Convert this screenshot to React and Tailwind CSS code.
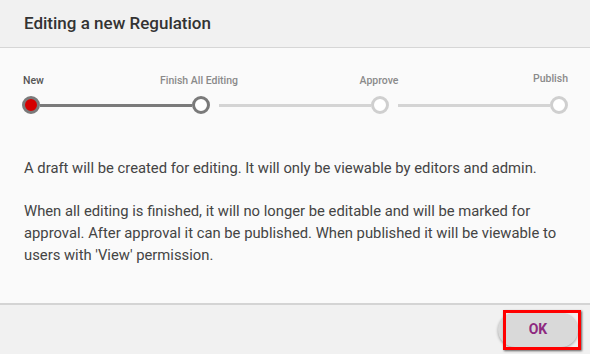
const steps = ['New', 'Finish All Editing', 'Approve', 'Publish'];

const Circle = ({ active, done }) => (
  <div
    className={`w-[18px] h-[18px] rounded-full shrink-0 border-[3px] ${
      active ? 'bg-[#d50000] border-[#7a7a7a]' : done ? 'bg-white border-[#7a7a7a]' : 'bg-white border-[#cfcfcf]'
    }`}
  />
);

const Stepper = () => (
  <div className="px-[22px] pt-[24px]">
    <div className="flex text-[10.5px] leading-[14px] font-medium">
      <div className="w-[117px] pl-[1px] text-[#555] mt-[2px]">{steps[0]}</div>
      <div className="w-[120px] text-center text-[#8a8a8a] mt-[2px]">{steps[1]}</div>
      <div className="w-[240px] text-center text-[#8a8a8a] mt-[2px]">{steps[2]}</div>
      <div className="w-[69px] text-right text-[#8a8a8a]">{steps[3]}</div>
    </div>
    <div className="flex items-center mt-[8px] w-[546px]">
      <Circle active />
      <div className="flex-1 h-[3px] bg-[#7a7a7a]" />
      <Circle done />
      <div className="flex-1 h-[3px] bg-[#d4d4d4] ml-[9px]" />
      <Circle />
      <div className="flex-1 h-[3px] bg-[#d4d4d4] ml-[9px]" />
      <Circle />
    </div>
  </div>
);

export default function App() {
  return (
    <div className="w-[590px] h-[354px] flex flex-col bg-[#fafafa] font-['Roboto',sans-serif] overflow-hidden">
      <div className="h-[48px] shrink-0 bg-[#f1f1f1] border-b border-[#d6d6d6] flex items-center px-[24px]">
        <h1 className="text-[17px] font-medium text-[#333]">Editing a new Regulation</h1>
      </div>
      <div className="flex-1 bg-[#fafafa]">
        <Stepper />
        <div className="pl-[24px] pr-[18px] pt-[43px] text-[14.8px] leading-[22px] text-[#444]">
          <p>A draft will be created for editing. It will only be viewable by editors and admin.</p>
          <p className="mt-[21px]">
            When all editing is finished, it will no longer be editable and will be marked for approval. After
            approval it can be published. When published it will be viewable to users with 'View' permission.
          </p>
        </div>
      </div>
      <div className="h-[51px] shrink-0 bg-[#f1f1f1] border-t-2 border-[#d4d4d4] flex items-center justify-end pr-[12px]">
        <div className="relative">
          <button className="w-[80px] h-[34px] rounded-[17px] bg-[#d9d9d9] shadow-[0_1px_3px_rgba(0,0,0,0.35)] text-[14px] font-bold text-[#8e2a80]">
            OK
          </button>
          <div className="absolute top-[-3px] bottom-[-3px] left-[5px] right-[-3px] border-[3px] border-[#ff0000] shadow-[1px_1px_2px_rgba(0,0,0,0.6)]" />
        </div>
      </div>
    </div>
  );
}
